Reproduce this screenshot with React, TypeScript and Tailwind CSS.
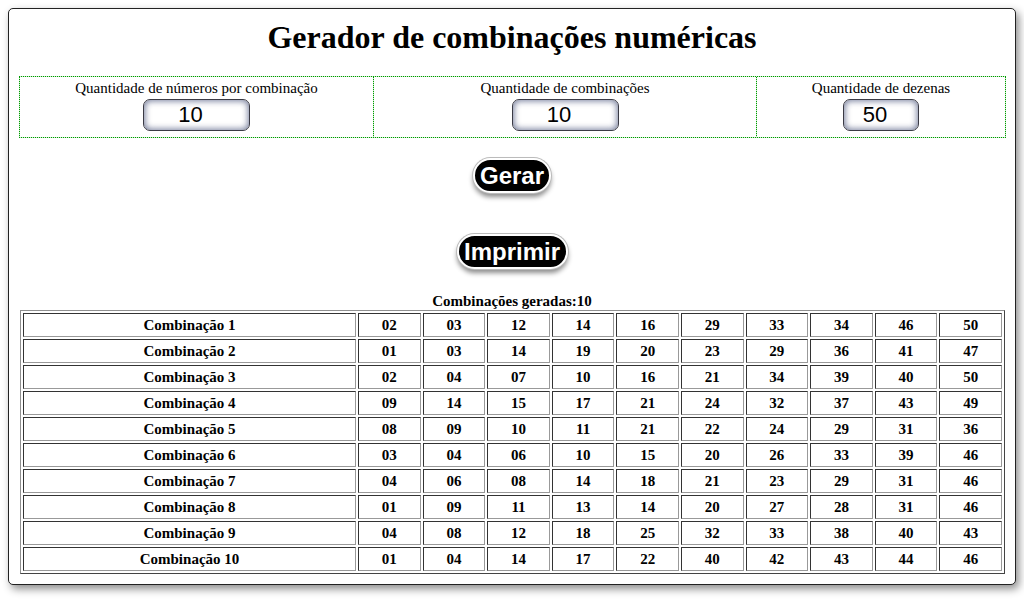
import React from "react";

const rows: string[][] = [
  ["02", "03", "12", "14", "16", "29", "33", "34", "46", "50"],
  ["01", "03", "14", "19", "20", "23", "29", "36", "41", "47"],
  ["02", "04", "07", "10", "16", "21", "34", "39", "40", "50"],
  ["09", "14", "15", "17", "21", "24", "32", "37", "43", "49"],
  ["08", "09", "10", "11", "21", "22", "24", "29", "31", "36"],
  ["03", "04", "06", "10", "15", "20", "26", "33", "39", "46"],
  ["04", "06", "08", "14", "18", "21", "23", "29", "31", "46"],
  ["01", "09", "11", "13", "14", "20", "27", "28", "31", "46"],
  ["04", "08", "12", "18", "25", "32", "33", "38", "40", "43"],
  ["01", "04", "14", "17", "22", "40", "42", "43", "44", "46"],
];

function HLine() {
  return <div className="h-px w-full bg-[repeating-linear-gradient(90deg,#009a00_0px,#009a00_1px,#c8ecc8_1px,#c8ecc8_2px)]" />;
}

function VLine() {
  return <div className="w-px self-stretch bg-[repeating-linear-gradient(180deg,#009a00_0px,#009a00_1px,#c8ecc8_1px,#c8ecc8_2px)]" />;
}

function NumInput({ value, w }: { value: string; w: string }) {
  return (
    <div
      className={`${w} h-[32px] rounded-[7px] border border-[#3a3a44] bg-white shadow-[inset_0_0_6px_1px_rgba(70,80,120,0.75)] flex items-center justify-center pr-3 text-[22px] leading-none text-black`}
      style={{ fontFamily: '"Liberation Sans", Arial, sans-serif' }}
    >
      {value}
    </div>
  );
}

function Field({ label, value, w, cw }: { label: string; value: string; w: string; cw: string }) {
  return (
    <div className={`${cw} flex flex-col items-center pt-[2px]`}>
      <div className="text-[15px] leading-[18px] text-black">{label}</div>
      <div className="mt-[2px]">
        <NumInput value={value} w={w} />
      </div>
    </div>
  );
}

export default function App() {
  return (
    <div
      className="w-[1024px] h-[600px] bg-white overflow-hidden pt-[8px] pl-[8px]"
      style={{ fontFamily: '"Liberation Serif", "Times New Roman", serif' }}
    >
      <div className="w-[1008px] h-[577px] border border-[#222] rounded-[5px] bg-white shadow-[3px_4px_8px_rgba(0,0,0,0.45)] px-[10px]">
        <div className="h-[67px] pt-[12px] text-center">
          <h1 className="text-[32px] font-bold leading-none text-black">Gerador de combinações numéricas</h1>
        </div>
        <div className="flex flex-col w-[987px] h-[62px]">
          <HLine />
          <div className="flex flex-1">
            <VLine />
            <Field cw="w-[353px]" label="Quantidade de números por combinação" value="10" w="w-[107px]" />
            <VLine />
            <Field cw="w-[382px]" label="Quantidade de combinações" value="10" w="w-[107px]" />
            <VLine />
            <Field cw="flex-1" label="Quantidade de dezenas" value="50" w="w-[76px]" />
            <VLine />
          </div>
          <HLine />
        </div>
        <div className="flex flex-col items-center" style={{ fontFamily: '"Liberation Sans", Arial, sans-serif' }}>
          <div className="mt-[20px] h-[35px] w-[78px] rounded-full bg-black border-2 border-white shadow-[0_4px_5px_rgba(0,0,0,0.45)] ring-1 ring-[#bbb] flex items-center justify-center text-white font-bold text-[24px] leading-none">
            Gerar
          </div>
          <div className="mt-[41px] h-[35px] w-[111px] rounded-full bg-black border-2 border-white shadow-[0_4px_5px_rgba(0,0,0,0.45)] ring-1 ring-[#bbb] flex items-center justify-center text-white font-bold text-[24px] leading-none">
            Imprimir
          </div>
        </div>
        <div className="mt-[24px] text-center text-[15px] font-bold leading-[16px] text-black">Combinações geradas:10</div>
        <table className="ml-px mt-[1px] w-[985px] table-fixed border-separate border-spacing-[2px] border border-t-[#909090] border-l-[#909090] border-b-[#444] border-r-[#444]">
          <colgroup>
            <col className="w-[333px]" />
            {rows[0].map((_, i) => (
              <col key={i} />
            ))}
          </colgroup>
          <tbody>
            {rows.map((r, i) => (
              <tr key={i}>
                <td className="h-[24px] p-0 pt-px text-center text-[15px] font-bold leading-none text-black border border-t-[#333] border-l-[#333] border-b-[#999] border-r-[#999]">
                  Combinação {i + 1}
                </td>
                {r.map((n, j) => (
                  <td
                    key={j}
                    className="h-[24px] p-0 pt-px text-center text-[15px] font-bold leading-none text-black border border-t-[#333] border-l-[#333] border-b-[#999] border-r-[#999]"
                  >
                    {n}
                  </td>
                ))}
              </tr>
            ))}
          </tbody>
        </table>
      </div>
    </div>
  );
}
